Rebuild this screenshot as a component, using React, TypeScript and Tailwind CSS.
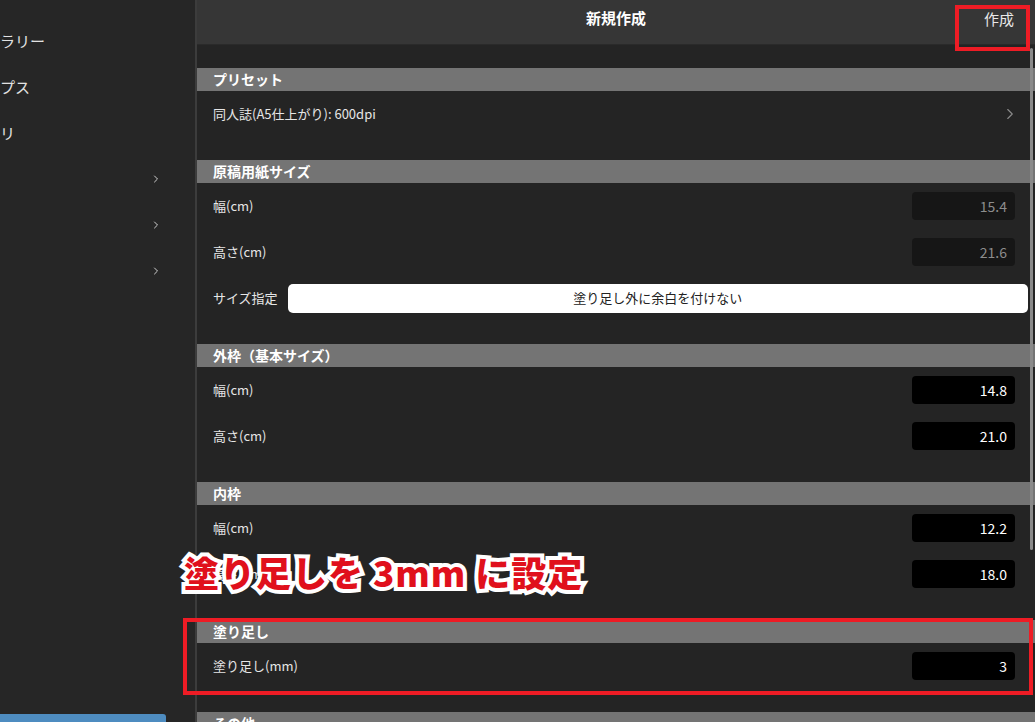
import { ChevronRight } from "lucide-react";

const font = { fontFamily: '"Noto Sans CJK JP", "Noto Sans", sans-serif' };

type Row = { label: string; value?: string; kind?: "dim" | "dark" };

function SectionHeader({ title }: { title: string }) {
  return (
    <div className="h-[23px] bg-[#747474] pl-4 flex items-center text-[14px] font-bold text-white">
      {title}
    </div>
  );
}

function InputRow({ label, value, kind = "dark" }: Row) {
  return (
    <div className="h-[46px] flex items-center justify-between pl-4 pr-5">
      <span className="text-[13px] text-[#e6e6e6]">{label}</span>
      <div
        className={
          kind === "dim"
            ? "w-[103px] h-[28px] rounded-[4px] bg-[#161616] flex items-center justify-end pr-2 text-[14px] text-[#8c8c8c]"
            : "w-[103px] h-[28px] rounded-[4px] bg-black flex items-center justify-end pr-2 text-[14px] text-white"
        }
      >
        {value}
      </div>
    </div>
  );
}

function Section({ title, children }: { title: string; children: React.ReactNode }) {
  return (
    <div className="pb-[23px]">
      <SectionHeader title={title} />
      {children}
    </div>
  );
}

export default function App() {
  return (
    <div style={font} className="w-[1035px] h-[722px] overflow-hidden flex bg-[#242424]">
      {/* sidebar */}
      <div className="w-[195px] shrink-0 bg-[#262626] relative">
        <div className="pt-[18px] flex flex-col text-[15px] text-[#e2e2e2]">
          <div className="h-[46px] flex items-center">ラリー</div>
          <div className="h-[46px] flex items-center">プス</div>
          <div className="h-[46px] flex items-center">リ</div>
          {[0, 1, 2].map((i) => (
            <div key={i} className="h-[46px] flex items-center justify-end pr-[33px] text-[#cfcfcf]">
              <ChevronRight size={12} strokeWidth={2} />
            </div>
          ))}
        </div>
        <div className="absolute left-0 bottom-0 w-[166px] h-[8px] rounded-tr-[3px] bg-[#4e8cc0]" />
      </div>

      {/* main */}
      <div className="flex-1 relative border-l-2 border-[#3c3c3c] bg-[#242424]">
        <div className="h-[45px] bg-[#363636] border-b border-[#2a2a2a] flex items-center justify-center relative">
          <span className="text-[15px] font-bold text-white -mt-[8px]">新規作成</span>
          <span className="absolute right-[21px] top-[8px] text-[15px] text-[#e8e8e8]">作成</span>
        </div>

        <div className="pt-[23px]">
          <Section title="プリセット">
            <div className="h-[46px] flex items-center justify-between pl-4 pr-4">
              <span className="text-[13px] text-[#e6e6e6]">同人誌(A5仕上がり): 600dpi</span>
              <ChevronRight size={18} strokeWidth={1.5} className="text-[#8a8a8a]" />
            </div>
          </Section>

          <Section title="原稿用紙サイズ">
            <InputRow label="幅(cm)" value="15.4" kind="dim" />
            <InputRow label="高さ(cm)" value="21.6" kind="dim" />
            <div className="h-[46px] flex items-center pl-4 pr-[7px] gap-[10px]">
              <span className="text-[13px] text-[#e6e6e6] whitespace-nowrap">サイズ指定</span>
              <div className="flex-1 h-[29px] rounded-[5px] bg-white flex items-center justify-center text-[13px] text-[#222]">
                塗り足し外に余白を付けない
              </div>
            </div>
          </Section>

          <Section title="外枠（基本サイズ）">
            <InputRow label="幅(cm)" value="14.8" />
            <InputRow label="高さ(cm)" value="21.0" />
          </Section>

          <Section title="内枠">
            <InputRow label="幅(cm)" value="12.2" />
            <InputRow label="高さ(cm)" value="18.0" />
          </Section>

          <Section title="塗り足し">
            <InputRow label="塗り足し(mm)" value="3" />
          </Section>

          <Section title="その他">
            <div className="h-[46px]" />
          </Section>
        </div>

        {/* scrollbar */}
        <div className="absolute right-[2px] top-[48px] w-[3px] h-[502px] rounded-full bg-[#8a8a8a]" />

        {/* annotation boxes */}
        <div className="absolute left-[758px] top-[5px] w-[75px] h-[46px] border-[4px] border-[#ee1c25]" />
        <div className="absolute left-[-14px] top-[618px] w-[850px] h-[77px] border-[4px] border-[#ee1c25]" />
      </div>

      {/* annotation caption */}
      <div className="absolute left-[184px] top-[546px] text-[35px] font-black text-[#e0101c] tracking-[1px] whitespace-nowrap [-webkit-text-stroke:8px_white] [paint-order:stroke_fill]">
        塗り足しを 3mm に設定
      </div>
    </div>
  );
}
